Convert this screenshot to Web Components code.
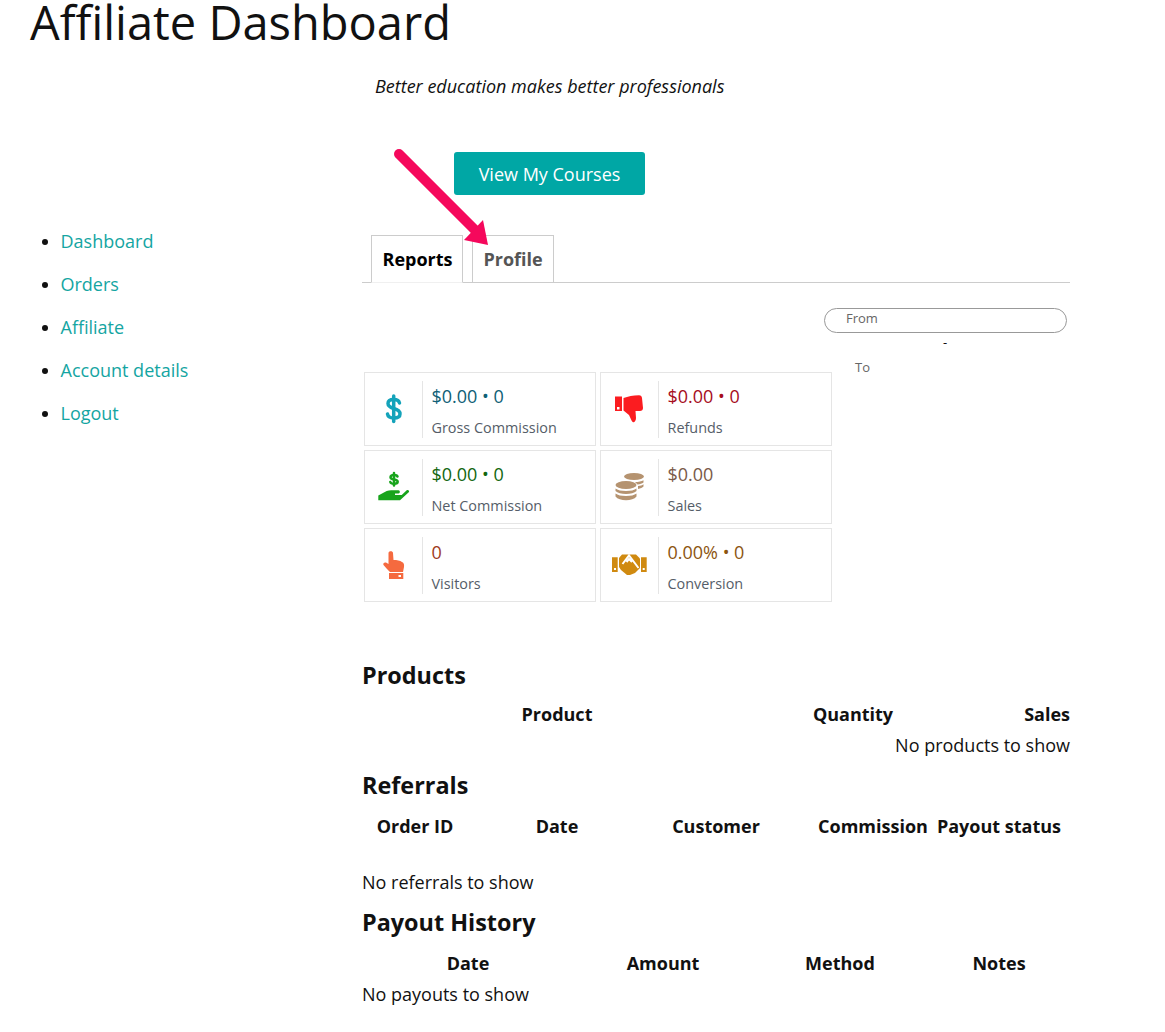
<!DOCTYPE html>
<html lang="en">
<head>
<meta charset="utf-8">
<title>Affiliate Dashboard</title>
<style>
  html, body { margin: 0; background: #fff; }
  body { font-family: "Open Sans", "Liberation Sans", sans-serif; font-size: 18px; color: #111; }
</style>
</head>
<body>
<dash-page>
  <side-nav slot="nav">
    <a href="#">Dashboard</a>
    <a href="#">Orders</a>
    <a href="#">Affiliate</a>
    <a href="#">Account details</a>
    <a href="#">Logout</a>
  </side-nav>

  <intro-block></intro-block>
  <report-tabs></report-tabs>
  <date-filter></date-filter>

  <stat-grid>
    <stat-card value="$0.00 • 0" label="Gross Commission" color="#0f6076">
      <svg slot="icon" width="44" height="44" viewBox="0 0 44 44"><g fill="none" stroke="#14a3ba" stroke-width="3.500" stroke-linecap="round"><path d="M27.500 16C27 13.500 25 12.500 21.700 12.500C18 12.500 16 14 16 16.500C16 19.500 18.700 20.500 21.700 21.500C25.700 22.500 28 24 28 27C28 30 25 31 21.700 31C18.500 31 16 30 15.500 27"/><path d="M21.700 9V34.500"/></g></svg>
    </stat-card>
    <stat-card value="$0.00 • 0" label="Refunds" color="#a60d1c">
      <svg slot="icon" width="44" height="44" viewBox="0 0 44 44"><path fill="#fb1c20" fill-rule="evenodd" d="M7 9.500H14V24H7ZM9 20V22.500H11.500V20Z"/><path fill="#fb1c20" d="M15.500 11C20 9.500 25 8.300 31 8.300C33 8.300 33.800 9.500 34 11L35 21C35 23 33.800 24 32 24H27.500L28 31C28 34 26 36 24.700 35C23.500 34 22.500 31 21 28L15.500 23.500Z"/></svg>
    </stat-card>
    <stat-card value="$0.00 • 0" label="Net Commission" color="#13670f">
      <svg slot="icon" width="44" height="44" viewBox="0 0 44 44"><g fill="none" stroke="#18a41c" stroke-width="2.500" stroke-linecap="round"><path d="M25.500 11.500C25 10.200 23.500 10 22 10C20 10 18.500 11 18.500 12.300C18.500 13.800 20 14.200 22 14.500C24 14.800 25.700 15.300 25.700 16.800C25.700 18 24 18.800 22 18.800C20 18.800 18.700 18.300 18.300 17"/><path d="M22 8V20.500"/></g><path fill="#18a41c" d="M6.300 30.500L14.700 26C17 25 19.500 25 21.300 25.300H26.500C28.300 25.300 28.300 28.500 26.500 28.500H23V30H29.700L34.700 25.300C36 24.500 37.500 25.700 37 27L28 35.300H6.300Z"/></svg>
    </stat-card>
    <stat-card value="$0.00" label="Sales" color="#7a5a48">
      <svg slot="icon" width="44" height="44" viewBox="0 0 44 44"><g fill="#b59370"><ellipse cx="26" cy="11.500" rx="10" ry="3.500"/><path d="M27 17C30.500 17 33.500 16.300 35.500 15.200V17.500C34 18.700 32 19.300 29.500 19.500ZM30 21C32.500 20.800 34 20.300 35.500 19.300V21.500C34.500 22.500 32.500 23.500 30 24Z"/><ellipse cx="18" cy="20" rx="10.500" ry="4"/><path d="M7.500 23.500C9.500 25.200 13.500 26 18 26C22.500 26 26.500 25.200 28.500 23.500V26C26.500 28 22.500 29 18 29C13.500 29 9.500 28 7.500 26ZM7.500 28.500C9.500 30.200 13.500 31 18 31C22.500 31 26.500 30.200 28.500 28.500V31.500C26.500 34 22.500 35.300 18 35.300C13.500 35.300 9.500 34 7.500 31.500Z"/></g></svg>
    </stat-card>
    <stat-card value="0" label="Visitors" color="#a03a1c">
      <svg slot="icon" width="44" height="44" viewBox="0 0 44 44"><path fill="#f56a3f" d="M16.500 10C16.500 7.800 21 7.800 21 10L21.500 17C25 17 28 17.500 30 19C32 20 32.300 21.500 32 24L31 29H18L15 26L11.500 22C10.800 20.500 12 19 14 19.500L16.500 21Z"/><path fill="#f56a3f" fill-rule="evenodd" d="M17 30H31.300V36H17ZM26.500 32V34H29V32Z"/></svg>
    </stat-card>
    <stat-card value="0.00% • 0" label="Conversion" color="#8c5510">
      <svg slot="icon" width="44" height="44" viewBox="0 0 44 44"><path fill="#d08a10" fill-rule="evenodd" d="M4 14.300H9.700V29H4ZM6 25V27H8V25ZM33 14.300H38.700V29H33ZM34.700 25V27H36.700V25Z"/><path fill="#d08a10" d="M14 11.500H28L32 15.500V25L27 30L22 32H19L13 27L11 24V15Z"/><path fill="none" stroke="#fff" stroke-width="2" d="M14.500 21L21 12.500L30.500 25M18.500 19L21 16L24 19"/></svg>
    </stat-card>
  </stat-grid>

  <data-section heading="Products" cols="390px 202px 116px" names="Product|Quantity|Sales" aligns="c|c|r" empty="No products to show" empty-align="right" head-gap="10"></data-section>
  <data-section heading="Referrals" cols="106px 178px 140px 142px 142px" names="Order ID|Date|Customer|Commission|Payout status" aligns="c|c|c|p|c" empty="No referrals to show" gap="31"></data-section>
  <data-section heading="Payout History" cols="212px 178px 176px 142px" names="Date|Amount|Method|Notes" aligns="c|c|c|c" empty="No payouts to show"></data-section>

  <svg slot="overlay" width="110" height="110" viewBox="0 0 110 110" style="position:absolute;left:390px;top:145px;overflow:visible"><path d="M9 9L84 84" fill="none" stroke="#f5085c" stroke-width="10" stroke-linecap="round"/><path d="M93 75L98 100L74 95Z" fill="#f5085c"/></svg>
</dash-page>

<script>
class DashPage extends HTMLElement {
  constructor() {
    super();
    this.attachShadow({ mode: 'open' });
  }
  connectedCallback() {
    this.shadowRoot.innerHTML = `
      <style>
        :host { display: block; position: relative; width: 1165px; height: 1032px; overflow: hidden; }
        h1 { margin: 0; padding: 0 30px; font-size: 47px; font-weight: 400; line-height: 44px; height: 50px; color: #111; }
        .cols { display: grid; grid-template-columns: 362px 708px; }
        main { display: block; }
      </style>
      <h1>Affiliate Dashboard</h1>
      <div class="cols">
        <slot name="nav"></slot>
        <main><slot></slot></main>
      </div>
      <slot name="overlay"></slot>
    `;
  }
}

class SideNav extends HTMLElement {
  constructor() {
    super();
    this.attachShadow({ mode: 'open' });
  }
  connectedCallback() {
    const items = [...this.querySelectorAll('a')]
      .map(a => `<li><a href="#">${a.textContent}</a></li>`).join('');
    this.shadowRoot.innerHTML = `
      <style>
        :host { display: block; padding-top: 170px; }
        ul { margin: 0; padding: 0 0 0 60.500px; }
        li { height: 43px; line-height: 43px; }
        a { color: #14a5a2; text-decoration: none; }
      </style>
      <ul>${items}</ul>
    `;
  }
}

class IntroBlock extends HTMLElement {
  constructor() {
    super();
    this.attachShadow({ mode: 'open' });
  }
  connectedCallback() {
    this.shadowRoot.innerHTML = `
      <style>
        :host { display: block; height: 185px; }
        p { margin: 0; padding: 24px 0 0 13px; font-style: italic; line-height: 25px; }
        button {
          display: block; margin: 53px 0 0 92px; width: 191px; height: 43px;
          background: #00a7a5; color: #fff; border: 0; border-radius: 3px;
          font: 18px "Open Sans", sans-serif;
        }
      </style>
      <p>Better education makes better professionals</p>
      <button>View My Courses</button>
    `;
  }
}

class ReportTabs extends HTMLElement {
  constructor() {
    super();
    this.attachShadow({ mode: 'open' });
  }
  connectedCallback() {
    this.shadowRoot.innerHTML = `
      <style>
        :host { display: flex; gap: 9px; height: 47px; padding-left: 9px; border-bottom: 1px solid #ccc; }
        div {
          box-sizing: border-box; width: 82px; height: 48px; padding-left: 10.500px; line-height: 47px;
          border: 1px solid #ccc; border-bottom: 0; font-weight: 700; color: #555; white-space: nowrap;
        }
        .active { width: 92px; color: #000; background: #fff; border-bottom: 1px solid #f0f0f0; }
      </style>
      <div class="active">Reports</div>
      <div>Profile</div>
    `;
  }
}

class DateFilter extends HTMLElement {
  constructor() {
    super();
    this.attachShadow({ mode: 'open' });
  }
  connectedCallback() {
    this.shadowRoot.innerHTML = `
      <style>
        :host { display: block; box-sizing: border-box; height: 89px; padding-top: 25px; font-size: 13px; color: #666; }
        .from {
          box-sizing: border-box; margin-left: 462px; width: 243px; height: 25px;
          padding-left: 21px; line-height: 18px;
          border: 1px solid #999; border-radius: 13px;
        }
        .dash { margin-left: 581px; color: #111; line-height: 18px; }
        .to { margin: 7px 0 0 493px; line-height: 18px; }
      </style>
      <div class="from">From</div>
      <div class="dash">-</div>
      <div class="to">To</div>
    `;
  }
}

class StatGrid extends HTMLElement {
  constructor() {
    super();
    this.attachShadow({ mode: 'open' });
  }
  connectedCallback() {
    this.shadowRoot.innerHTML = `
      <style>
        :host { display: grid; grid-template-columns: 232px 232px; gap: 4px; padding: 0 0 57px 2px; }
      </style>
      <slot></slot>
    `;
  }
}

class StatCard extends HTMLElement {
  constructor() {
    super();
    this.attachShadow({ mode: 'open' });
  }
  connectedCallback() {
    this.shadowRoot.innerHTML = `
      <style>
        :host { display: flex; box-sizing: border-box; height: 74px; border: 1px solid #e5e5e5; align-items: center; }
        .icon { width: 58px; height: 57px; flex: none; display: flex; align-items: center; padding-left: 7px; box-sizing: border-box; border-right: 1px solid #e5e5e5; }
        .text { padding-left: 8.500px; }
        .value { font-size: 18px; line-height: 25px; margin-top: 3px; }
        .label { font-size: 14.400px; line-height: 19px; margin-top: 9px; color: #555d68; }
        ::slotted(svg) { display: block; }
      </style>
      <div class="icon"><slot name="icon"></slot></div>
      <div class="text">
        <div class="value" style="color:${this.getAttribute('color')}">${this.getAttribute('value')}</div>
        <div class="label">${this.getAttribute('label')}</div>
      </div>
    `;
  }
}

class DataSection extends HTMLElement {
  constructor() {
    super();
    this.attachShadow({ mode: 'open' });
  }
  connectedCallback() {
    const names = this.getAttribute('names').split('|');
    const aligns = this.getAttribute('aligns').split('|');
    const cells = names.map((n, i) => {
      const cls = aligns[i] === 'r' ? 'r' : aligns[i] === 'p' ? 'p' : 'c';
      return `<div class="${cls}">${n}</div>`;
    }).join('');
    this.shadowRoot.innerHTML = `
      <style>
        :host { display: block; }
        h2 { margin: 0; font-size: 23.400px; font-weight: 700; line-height: 33px; color: #111; }
        .head { display: grid; grid-template-columns: ${this.getAttribute('cols')}; font-weight: 700; line-height: 25px; margin-top: ${this.getAttribute('head-gap') || 12}px; white-space: nowrap; }
        .c { text-align: center; }
        .r { text-align: right; }
        .p { text-align: center; padding-left: 32px; }
        .empty { line-height: 25px; margin-top: ${this.getAttribute('gap') || 6}px; text-align: ${this.getAttribute('empty-align') || 'left'}; padding-bottom: 11px; }
      </style>
      <h2>${this.getAttribute('heading')}</h2>
      <div class="head">${cells}</div>
      <div class="empty">${this.getAttribute('empty')}</div>
    `;
  }
}

customElements.define('dash-page', DashPage);
customElements.define('side-nav', SideNav);
customElements.define('intro-block', IntroBlock);
customElements.define('report-tabs', ReportTabs);
customElements.define('date-filter', DateFilter);
customElements.define('stat-grid', StatGrid);
customElements.define('stat-card', StatCard);
customElements.define('data-section', DataSection);
</script>
</body>
</html>
